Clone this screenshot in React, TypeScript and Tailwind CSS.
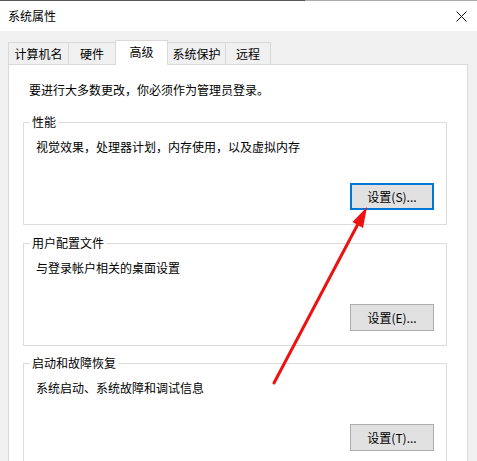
import React from "react";

const font = { fontFamily: '"Noto Sans CJK SC", "Microsoft YaHei", sans-serif' };

function Tab({ label, w, selected, first }: { label: string; w: string; selected?: boolean; first?: boolean }) {
  if (selected) {
    return (
      <div
        className={`relative z-10 -ml-px -mb-px flex h-[25px] items-start justify-center border border-b-0 border-[#d9d9d9] bg-white pt-[3px] ${w}`}
      >
        <span className="leading-[16px]">{label}</span>
      </div>
    );
  }
  return (
    <div
      className={`flex h-[22px] items-start justify-center border border-b-0 border-[#d9d9d9] bg-[#f0f0f0] pt-[3px] ${first ? "" : "-ml-px"} ${w}`}
    >
      <span className="leading-[16px]">{label}</span>
    </div>
  );
}

function Group({ title, desc, btn, focused, mt }: { title: string; desc: string; btn: string; focused?: boolean; mt: string }) {
  return (
    <fieldset className={`${mt} ml-[14px] w-[424px] border border-[#dcdcdc] pl-[6px] pr-[12px] pb-[14px]`}>
      <legend className="px-[2px] leading-[16px]">{title}</legend>
      <div className="ml-[6px] pt-[9px] leading-[16px]">{desc}</div>
      <div className="mt-[28px] flex justify-end">
        {focused ? (
          <div className="flex h-[27px] w-[84px] items-center justify-center border-2 border-[#0078d7] bg-[#e1e1e1] leading-[16px]">
            {btn}
          </div>
        ) : (
          <div className="flex h-[27px] w-[84px] items-center justify-center border border-[#adadad] bg-[#e1e1e1] leading-[16px]">
            {btn}
          </div>
        )}
      </div>
    </fieldset>
  );
}

export default function App() {
  return (
    <div className="relative h-[461px] w-[477px] overflow-hidden bg-[#f0f0f0] text-[12px] text-black" style={font}>
      {/* title bar */}
      <div className="flex h-px">
        <div className="w-[305px] bg-[#555555]" />
        <div className="flex-1 bg-[#aaaaaa]" />
      </div>
      <div className="flex h-[30px] items-center justify-between bg-white pl-[8px] pr-[10px]">
        <span className="leading-[16px]">系统属性</span>
        <svg width="11" height="11" viewBox="0 0 11 11" className="mt-[1px]">
          <path d="M0.5 0.5 L10.5 10.5 M10.5 0.5 L0.5 10.5" stroke="#111" strokeWidth="1" fill="none" />
        </svg>
      </div>

      {/* tabs */}
      <div className="flex h-[33px] items-end pl-[8px]">
        <Tab label="计算机名" w="w-[61px]" first />
        <Tab label="硬件" w="w-[48px]" />
        <Tab label="高级" w="w-[53px]" selected />
        <Tab label="系统保护" w="w-[59px]" />
        <Tab label="远程" w="w-[46px]" />
      </div>

      {/* panel */}
      <div className="ml-[8px] h-[420px] w-[460px] border border-[#d9d9d9] bg-white pt-[17px]">
        <div className="ml-[20px] leading-[16px]">要进行大多数更改，你必须作为管理员登录。</div>
        <Group mt="mt-[16px]" title="性能" desc="视觉效果，处理器计划，内存使用，以及虚拟内存" btn="设置(S)..." focused />
        <Group mt="mt-[10px]" title="用户配置文件" desc="与登录帐户相关的桌面设置" btn="设置(E)..." />
        <Group mt="mt-[9px]" title="启动和故障恢复" desc="系统启动、系统故障和调试信息" btn="设置(T)..." />
      </div>

      {/* red arrow annotation */}
      <svg className="pointer-events-none absolute left-0 top-0" width="477" height="461" viewBox="0 0 477 461">
        <line x1="274" y1="383" x2="359" y2="222" stroke="#ee1111" strokeWidth="3" strokeLinecap="round" />
        <polygon points="367,207 363,228 352.4,222" fill="#ee1111" />
      </svg>
    </div>
  );
}
